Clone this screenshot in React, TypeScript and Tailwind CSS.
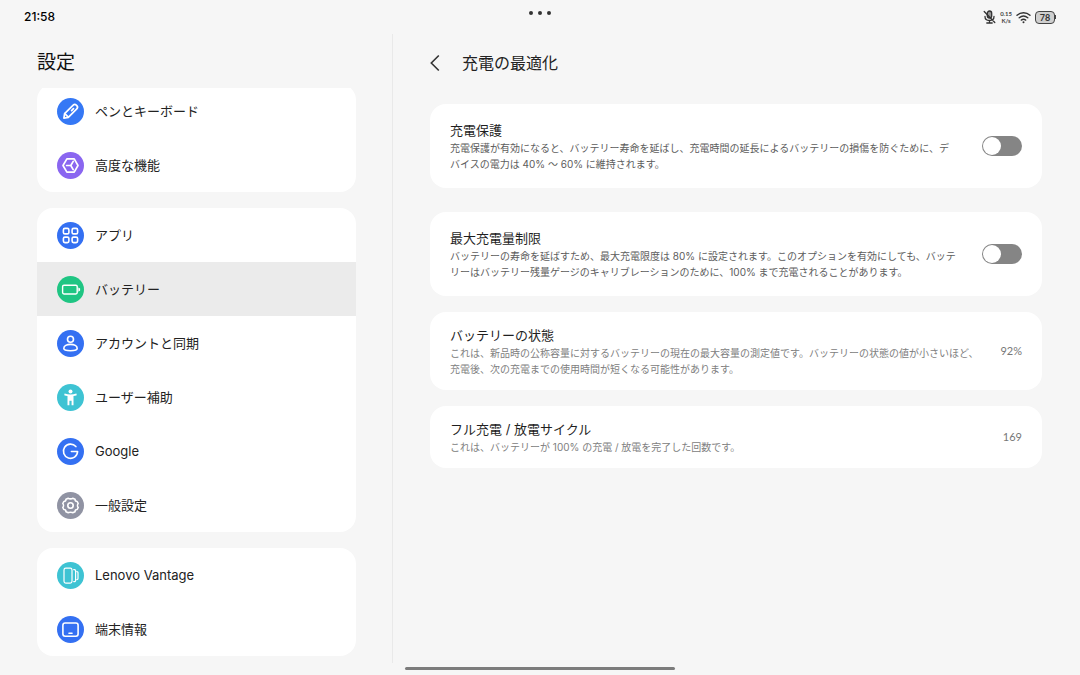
import React, { useState } from "react";

const round = {
  fill: "none",
  stroke: "#fff",
  strokeWidth: 1.6,
  strokeLinecap: "round",
  strokeLinejoin: "round",
} as const;

type Item = { label: string; bg: string; glyph: React.ReactNode; current?: boolean };

const pen = (
  <g {...round} strokeWidth={1.7}>
    <path d="M6.900 20.200l.7-4.600 8.600-8.400a2.200 2.200 0 0 1 3.100 0l.5.500a2.200 2.200 0 0 1 0 3.100l-8.500 8.600z" />
    <path d="M7.800 15.600l3.500 3.500M14.600 12.600l1.900-1.900" />
  </g>
);

const cube = (
  <g {...round} strokeWidth={1.700}>
    <path d="M6 13.500L9.900 6.900h7.300l3.800 6.600-3.800 6.600H9.900z" />
    <path d="M9.600 13.500h4.200M16.200 9.300l-2.400 4.200 2.400 4.200" />
  </g>
);

const apps = (
  <g {...round}>
    <rect x="6.400" y="6.400" width="5.500" height="5.500" rx="1.500" />
    <rect x="15.100" y="6.400" width="5.500" height="5.500" rx="1.500" />
    <rect x="6.400" y="15.100" width="5.500" height="5.500" rx="1.500" />
    <rect x="15.100" y="15.100" width="5.500" height="5.500" rx="1.500" />
  </g>
);

const battery = (
  <g>
    <rect {...round} strokeWidth={1.400} x="5.600" y="9.200" width="14.600" height="8.800" rx="1.400" />
    <path fill="#fff" d="M21.300 11.400l1.800 1.200v2l-1.800 1.200z" />
  </g>
);

const account = (
  <g {...round}>
    <circle cx="13.500" cy="9.300" r="3" />
    <path d="M6.800 18.500c0-2.400 3-4.100 6.700-4.100s6.700 1.700 6.700 4.100c0 1.500-2.500 2.200-6.700 2.200s-6.700-.7-6.700-2.200z" />
  </g>
);

const accessibility = (
  <g fill="#fff">
    <circle cx="13.500" cy="7.600" r="2" />
    <path d="M7.600 9.600c2 .6 3.900.8 5.900.8s3.900-.2 5.900-.8l.4 1.700c-1.200.4-2.200.6-3.300.7v9.300h-1.900v-4.600h-2.200v4.600h-1.900V12c-1.100-.1-2.100-.3-3.300-.7z" />
  </g>
);

const google = (
  <path {...round} d="M18.900 8.600a7.100 7.100 0 1 0 1.700 4.900h-6.200" />
);

const gear = (
  <g {...round}>
    <path d="M11.300 6.300c.8.700 3.600.7 4.400 0l2.300 1c0 1.100 1.100 2.200 2.200 2.200l1 2c-.9 1-.9 3 0 4l-1 2c-1.100 0-2.200 1.100-2.200 2.200l-2.300 1c-.8-.7-3.600-.7-4.400 0l-2.300-1c0-1.100-1.100-2.200-2.200-2.200l-1-2c.9-1 .9-3 0-4l1-2c1.100 0 2.200-1.100 2.200-2.200z" />
    <circle cx="13.500" cy="13.500" r="2.700" />
  </g>
);

const vantage = (
  <g {...round} strokeWidth={1.200}>
    <rect x="7" y="6.100" width="8" height="15" rx="1.800" />
    <path d="M16.700 7.600h.7a1.200 1.200 0 0 1 1.200 1.200v9.600a1.200 1.200 0 0 1-1.200 1.200h-.7M19.900 9.600c.7 0 1.100.5 1.100 1v6c0 .6-.4 1-1.100 1" />
  </g>
);

const tablet = (
  <g {...round}>
    <rect x="5.900" y="7" width="15.200" height="13.200" rx="2.200" />
    <path d="M12 17.200h3" />
  </g>
);

const groups: Item[][] = [
  [
    { label: "ペンとキーボード", bg: "fill-[#3578f5]", glyph: pen },
    { label: "高度な機能", bg: "fill-[#8a66f0]", glyph: cube },
  ],
  [
    { label: "アプリ", bg: "fill-[#3470f2]", glyph: apps },
    { label: "バッテリー", bg: "fill-[#1fc583]", glyph: battery, current: true },
    { label: "アカウントと同期", bg: "fill-[#3470f2]", glyph: account },
    { label: "ユーザー補助", bg: "fill-[#3ec3d3]", glyph: accessibility },
    { label: "Google", bg: "fill-[#3470f2]", glyph: google },
    { label: "一般設定", bg: "fill-[#9093a3]", glyph: gear },
  ],
  [
    { label: "Lenovo Vantage", bg: "fill-[#3ec3d3]", glyph: vantage },
    { label: "端末情報", bg: "fill-[#3470f2]", glyph: tablet },
  ],
];

function StatusBar() {
  return (
    <header className="relative flex h-[34px] shrink-0 items-center justify-between px-6 text-black">
      <time className="font-['Inter',sans-serif] text-[12px] font-medium leading-4">21:58</time>
      <button aria-label="マルチタスク" className="absolute left-1/2 top-2 flex h-[10px] -translate-x-1/2 items-center gap-[5px]">
        <i className="size-1 rounded-full bg-[#333]" />
        <i className="size-1 rounded-full bg-[#333]" />
        <i className="size-1 rounded-full bg-[#333]" />
      </button>
      <div className="flex items-center gap-1">
        <svg viewBox="0 0 13 14" className="h-[14px] w-[13px]" fill="none" stroke="#333" strokeWidth="1.300" strokeLinecap="round">
          <rect x="4.300" y="1" width="4.400" height="7" rx="2.200" fill="#999" />
          <path d="M2 6.500c0 2.500 2 4 4.500 4s4.500-1.500 4.500-4M6.500 10.500V13M3.800 13h5.400M1.200 1.500l10.600 11" />
        </svg>
        <div className="flex flex-col items-center font-['Lato',sans-serif] text-[6px] font-bold leading-[7px] text-[#444]">
          <span>0.15</span>
          <span>K/s</span>
        </div>
        <svg viewBox="0 0 15 13" className="h-[13px] w-[15px]" fill="none" stroke="#333" strokeWidth="1.400" strokeLinecap="round">
          <path d="M1 4.300c3.800-3.400 9.200-3.400 13 0M3.200 6.800c2.600-2.200 6-2.200 8.600 0M5.300 9.100c1.400-1.100 3-1.100 4.400 0" />
          <circle cx="7.500" cy="11.300" r="1" fill="#333" stroke="none" />
        </svg>
        <div className="flex items-center">
          <span className="flex h-[13px] w-5 items-center justify-center rounded border border-[#444] bg-[#cfcfcf] font-['Lato',sans-serif] text-[9px] font-bold leading-none text-[#333]">
            78
          </span>
          <i className="h-1 w-px bg-[#444]" />
        </div>
      </div>
    </header>
  );
}

function Sidebar() {
  return (
    <aside className="flex w-[393px] shrink-0 flex-col border-r border-[#e9e9e9] pl-[37px] pr-9">
      <h1 className="flex h-[54px] shrink-0 items-center pt-1 text-[19px] font-normal leading-6 text-[#111]">設定</h1>
      <nav className="min-h-0 flex-1 overflow-hidden rounded-t-[4px]">
        <div className="-mt-1 flex flex-col gap-4">
          {groups.map((group, i) => (
            <ul key={i} className="overflow-hidden rounded-2xl bg-white">
              {group.map((item) => (
                <li key={item.label}>
                  <a
                    href="#"
                    aria-current={item.current ? "page" : undefined}
                    className="flex h-[54px] items-center gap-[11px] px-5 text-[13px] leading-5 text-[#222] aria-[current=page]:bg-[#ebebeb]"
                  >
                    <svg viewBox="0 0 27 27" className="size-[27px] shrink-0">
                      <circle cx="13.5" cy="13.5" r="13.5" className={item.bg} />
                      {item.glyph}
                    </svg>
                    {item.label}
                  </a>
                </li>
              ))}
            </ul>
          ))}
        </div>
      </nav>
    </aside>
  );
}

function Switch({ id }: { id: string }) {
  const [on, setOn] = useState(false);
  return (
    <input
      id={id}
      type="checkbox"
      role="switch"
      checked={on}
      onChange={(e) => setOn(e.target.checked)}
      className="h-5 w-10 shrink-0 appearance-none rounded-full bg-[#858585] p-px before:block before:size-[18px] before:rounded-full before:bg-white checked:bg-[#3470f2] checked:before:ml-5"
    />
  );
}

function SwitchCard({ id, title, children }: { id: string; title: string; children: React.ReactNode }) {
  return (
    <section className="flex items-center justify-between gap-5 rounded-2xl bg-white px-5 py-4">
      <label htmlFor={id} className="min-w-0">
        <span className="block text-[13px] leading-5 text-[#1f1f1f]">{title}</span>
        <span className="block text-[10px] leading-4 text-[#5c5c5c]">{children}</span>
      </label>
      <Switch id={id} />
    </section>
  );
}

function ValueCard({ title, value, children }: { title: string; value: string; children: React.ReactNode }) {
  return (
    <section className="flex items-center justify-between gap-4 rounded-2xl bg-white px-5 py-[13px]">
      <div className="min-w-0">
        <h3 className="text-[13px] leading-5 text-[#1f1f1f]">{title}</h3>
        <p className="text-[10px] leading-4 text-[#808080]">{children}</p>
      </div>
      <span className="font-['Lato',sans-serif] text-[11px] leading-4 text-[#777]">{value}</span>
    </section>
  );
}

export default function App() {
  return (
    <div
      lang="ja"
      className="relative flex h-screen flex-col overflow-hidden bg-[#f6f6f6] font-['Inter','Noto_Sans_CJK_JP',sans-serif]"
    >
      <StatusBar />
      <div className="flex min-h-0 flex-1 pb-3">
        <Sidebar />
        <main className="min-w-0 flex-1 pl-[37px] pr-[38px]">
          <div className="flex h-[70px] items-start pt-[17px]">
            <button aria-label="戻る" className="flex h-6 w-8 items-center">
              <svg viewBox="0 0 10 18" className="h-[18px] w-[10px]" fill="none" stroke="#333" strokeWidth="1.600">
                <path d="M8.800 1.500L1.300 9l7.500 7.500" />
              </svg>
            </button>
            <h2 className="text-[16px] leading-6 text-[#222]">充電の最適化</h2>
          </div>
          <div className="flex flex-col gap-6">
            <SwitchCard id="protect" title="充電保護">
              充電保護が有効になると、バッテリー寿命を延ばし、充電時間の延長によるバッテリーの損傷を防ぐために、デ
              <br />
              バイスの電力は 40% ～ 60% に維持されます。
            </SwitchCard>
            <SwitchCard id="limit" title="最大充電量制限">
              バッテリーの寿命を延ばすため、最大充電限度は 80% に設定されます。このオプションを有効にしても、バッテ
              <br />
              リーはバッテリー残量ゲージのキャリブレーションのために、100% まで充電されることがあります。
            </SwitchCard>
          </div>
          <div className="mt-4 flex flex-col gap-4">
            <ValueCard title="バッテリーの状態" value="92%">
              これは、新品時の公称容量に対するバッテリーの現在の最大容量の測定値です。バッテリーの状態の値が小さいほど、
              <br />
              充電後、次の充電までの使用時間が短くなる可能性があります。
            </ValueCard>
            <ValueCard title="フル充電 / 放電サイクル" value="169">
              これは、バッテリーが 100% の充電 / 放電を完了した回数です。
            </ValueCard>
          </div>
        </main>
      </div>
      <div className="absolute bottom-[5px] left-1/2 h-[3px] w-1/4 -translate-x-1/2 rounded-full bg-[#7c7c7c]" />
    </div>
  );
}
